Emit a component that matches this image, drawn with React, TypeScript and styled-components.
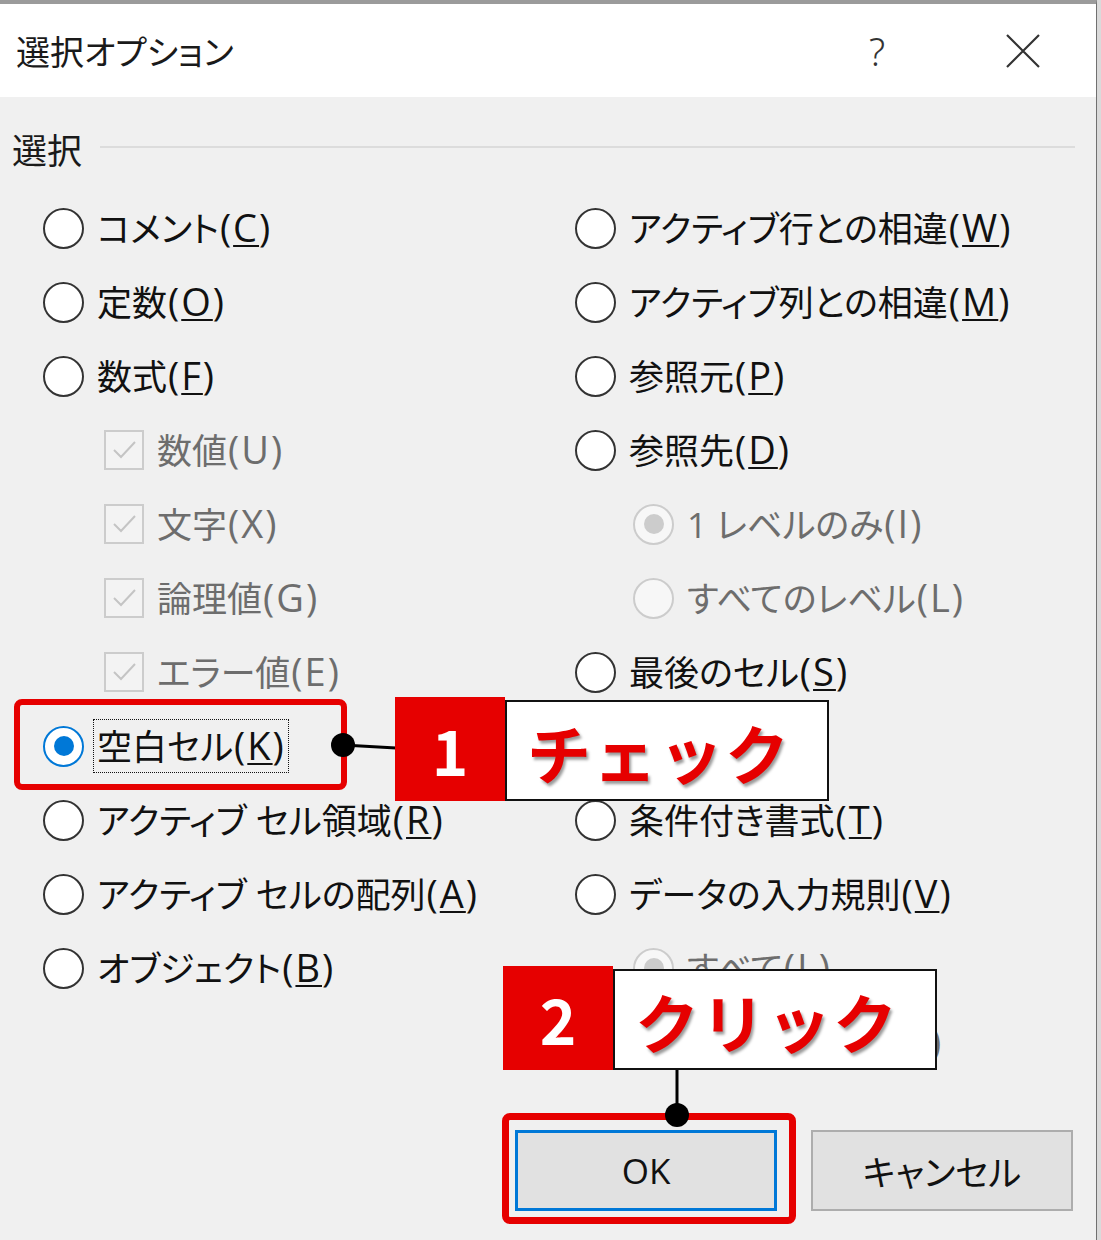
import React from "react";
import styled, { createGlobalStyle } from "styled-components";

const GlobalStyle = createGlobalStyle`
  html, body {
    margin: 0;
    padding: 0;
    background: #f0f0f0;
  }
  body {
    font-family: "Open Sans", "Noto Sans CJK JP", sans-serif;
  }
`;

const RED = "#e60000";

const Page = styled.div`
  position: relative;
  width: 1101px;
  height: 1240px;
  background: #dadada;
  overflow: hidden;
`;

const Dialog = styled.div`
  width: 1096px;
  height: 1236px;
  border-top: 4px solid #9b9b9b;
  border-right: 1px solid #707070;
  background: #f0f0f0;
  display: flex;
  flex-direction: column;
  font-feature-settings: "palt";
`;

const TitleBar = styled.div`
  height: 93px;
  background: #fff;
  display: flex;
  align-items: center;
  padding: 0 56px 0 16px;
`;

const Title = styled.div`
  flex: 1;
  font-size: 34px;
  color: #1a1a1a;
`;

const HelpMark = styled.div`
  width: 22px;
  margin-right: 118px;
  font-family: "Noto Sans", sans-serif;
  font-weight: 300;
  font-size: 38px;
  color: #333;
  text-align: center;
`;

const Body = styled.div`
  flex: 1;
  padding-top: 28px;
`;

const GroupHeader = styled.div`
  height: 46px;
  display: flex;
  align-items: center;
  padding: 0 21px 0 12px;
  font-size: 35px;
  color: #1a1a1a;
`;

const GroupLine = styled.div`
  flex: 1;
  height: 2px;
  margin: 0 0 2px 18px;
  background: #dcdcdc;
`;

const Columns = styled.div`
  display: flex;
  padding-left: 43px;
  margin-top: 20px;
`;

const Column = styled.div<{ $width?: number }>`
  display: flex;
  flex-direction: column;
  ${(p) => (p.$width ? `width: ${p.$width}px;` : "flex: 1;")}
`;

const Row = styled.div<{ $indent?: number }>`
  height: 74px;
  display: flex;
  align-items: center;
  gap: 13px;
  padding-left: ${(p) => p.$indent ?? 0}px;
`;

const Radio = styled.span<{ $checked?: boolean; $disabled?: boolean }>`
  box-sizing: border-box;
  width: 41px;
  height: 41px;
  flex: none;
  border-radius: 50%;
  border: 2px solid
    ${(p) => (p.$disabled ? "#cccccc" : p.$checked ? "#0078d7" : "#333")};
  background: ${(p) => (p.$disabled ? "#f7f7f7" : "#fff")};
  display: flex;
  align-items: center;
  justify-content: center;
  &::after {
    content: "";
    display: ${(p) => (p.$checked ? "block" : "none")};
    width: 20px;
    height: 20px;
    border-radius: 50%;
    background: ${(p) => (p.$disabled ? "#cccccc" : "#0078d7")};
  }
`;

const CheckBox = styled.span`
  box-sizing: border-box;
  width: 40px;
  height: 40px;
  flex: none;
  border: 2px solid #cccccc;
  background: #f3f3f3;
  display: flex;
  align-items: center;
  justify-content: center;
`;

const Label = styled.span<{ $disabled?: boolean; $focused?: boolean }>`
  font-size: 35px;
  line-height: 48px;
  white-space: nowrap;
  color: ${(p) => (p.$disabled ? "#6d6d6d" : "#111")};
  padding: 1px 2px 1px 3px;
  margin-left: -3px;
  outline: ${(p) => (p.$focused ? "1px dotted #111" : "none")};
`;

const Accel = styled.span`
  font-size: 38px;
  letter-spacing: 2px;
  margin-left: 1px;
`;

const Key = styled.u`
  text-decoration-thickness: 2px;
  text-underline-offset: 3px;
`;

const ButtonRow = styled.div`
  display: flex;
  justify-content: flex-end;
  gap: 34px;
  padding-right: 23px;
  margin-top: 51px;
`;

const Button = styled.div<{ $primary?: boolean }>`
  box-sizing: border-box;
  width: 262px;
  height: 81px;
  background: #e1e1e1;
  border: ${(p) => (p.$primary ? "3px solid #0078d7" : "2px solid #adadad")};
  display: flex;
  align-items: center;
  justify-content: center;
  font-size: 35px;
  color: #111;
`;

/* annotations laid over the dialog */

const Highlight = styled.div<{ $x: number; $y: number; $w: number; $h: number; $b: number }>`
  position: absolute;
  box-sizing: border-box;
  left: ${(p) => p.$x}px;
  top: ${(p) => p.$y}px;
  width: ${(p) => p.$w}px;
  height: ${(p) => p.$h}px;
  border: ${(p) => p.$b}px solid ${RED};
  border-radius: 8px;
`;

const Callout = styled.div<{ $x: number; $y: number }>`
  position: absolute;
  left: ${(p) => p.$x}px;
  top: ${(p) => p.$y}px;
  display: flex;
  align-items: flex-end;
  font-family: "Noto Sans CJK JP", sans-serif;
`;

const StepBadge = styled.div`
  width: 110px;
  height: 104px;
  background: ${RED};
  color: #fff;
  font-size: 62px;
  font-weight: 700;
  display: flex;
  align-items: center;
  justify-content: center;
`;

const CalloutText = styled.div`
  box-sizing: border-box;
  width: 324px;
  height: 101px;
  background: #fff;
  border: 2px solid #111;
  display: flex;
  align-items: center;
  padding: 0 0 0 20px;
  white-space: nowrap;
  overflow: hidden;
  font-size: 64px;
  font-weight: 700;
  letter-spacing: 2px;
  color: ${RED};
  text-shadow: 2px 3px 3px rgba(0, 0, 0, 0.4);
`;

const Connector = styled.svg`
  position: absolute;
  left: 0;
  top: 0;
  pointer-events: none;
`;

type Item = {
  kind: "radio" | "check";
  text: string;
  key: string;
  plain?: boolean;
  indent?: number;
  checked?: boolean;
  disabled?: boolean;
  focused?: boolean;
};

const left: Item[] = [
  { kind: "radio", text: "コメント", key: "C" },
  { kind: "radio", text: "定数", key: "O" },
  { kind: "radio", text: "数式", key: "F" },
  { kind: "check", text: "数値", key: "U", plain: true, indent: 61, checked: true, disabled: true },
  { kind: "check", text: "文字", key: "X", plain: true, indent: 61, checked: true, disabled: true },
  { kind: "check", text: "論理値", key: "G", plain: true, indent: 61, checked: true, disabled: true },
  { kind: "check", text: "エラー値", key: "E", plain: true, indent: 61, checked: true, disabled: true },
  { kind: "radio", text: "空白セル", key: "K", checked: true, focused: true },
  { kind: "radio", text: "アクティブ セル領域", key: "R" },
  { kind: "radio", text: "アクティブ セルの配列", key: "A" },
  { kind: "radio", text: "オブジェクト", key: "B" },
];

const right: Item[] = [
  { kind: "radio", text: "アクティブ行との相違", key: "W" },
  { kind: "radio", text: "アクティブ列との相違", key: "M" },
  { kind: "radio", text: "参照元", key: "P" },
  { kind: "radio", text: "参照先", key: "D" },
  { kind: "radio", text: "1 レベルのみ", key: "I", plain: true, indent: 58, checked: true, disabled: true },
  { kind: "radio", text: "すべてのレベル", key: "L", plain: true, indent: 58, disabled: true },
  { kind: "radio", text: "最後のセル", key: "S" },
  { kind: "radio", text: "可視セル", key: "Y" },
  { kind: "radio", text: "条件付き書式", key: "T" },
  { kind: "radio", text: "データの入力規則", key: "V" },
  { kind: "radio", text: "すべて", key: "L", plain: true, indent: 58, checked: true, disabled: true },
  { kind: "radio", text: "同じ入力規則", key: "E", plain: true, indent: 58, disabled: true },
];

const CheckMark = () => (
  <svg width="30" height="30" viewBox="0 0 30 30">
    <polyline points="5,15 12,22 26,7" fill="none" stroke="#c4c4c4" strokeWidth="2" />
  </svg>
);

const CloseIcon = () => (
  <svg width="34" height="34" viewBox="0 0 34 34">
    <path d="M1 1 L33 33 M33 1 L1 33" stroke="#333" strokeWidth="2.2" fill="none" />
  </svg>
);

const Option: React.FC<{ item: Item }> = ({ item }) => (
  <Row $indent={item.indent}>
    {item.kind === "radio" ? (
      <Radio $checked={item.checked} $disabled={item.disabled} />
    ) : (
      <CheckBox>{item.checked && <CheckMark />}</CheckBox>
    )}
    <Label $disabled={item.disabled} $focused={item.focused}>
      {item.text}
      <Accel>
        ({item.plain ? item.key : <Key>{item.key}</Key>})
      </Accel>
    </Label>
  </Row>
);

const App: React.FC = () => {
  return (
    <Page>
      <GlobalStyle />
      <Dialog>
        <TitleBar>
          <Title>選択オプション</Title>
          <HelpMark>?</HelpMark>
          <CloseIcon />
        </TitleBar>
        <Body>
          <GroupHeader>
            選択
            <GroupLine />
          </GroupHeader>
          <Columns>
            <Column $width={532}>
              {left.map((it) => (
                <Option key={it.text} item={it} />
              ))}
            </Column>
            <Column>
              {right.map((it) => (
                <Option key={it.text} item={it} />
              ))}
            </Column>
          </Columns>
          <ButtonRow>
            <Button $primary>OK</Button>
            <Button>キャンセル</Button>
          </ButtonRow>
        </Body>
      </Dialog>

      <Highlight $x={14} $y={699} $w={333} $h={91} $b={6} />
      <Highlight $x={502} $y={1113} $w={294} $h={111} $b={7} />

      <Connector width="1101" height="1240">
        <line x1="343" y1="745" x2="396" y2="748" stroke="#000" strokeWidth="3" />
        <circle cx="343" cy="745" r="12" fill="#000" />
        <line x1="677" y1="1070" x2="677" y2="1114" stroke="#000" strokeWidth="3" />
        <circle cx="677" cy="1115" r="12" fill="#000" />
      </Connector>

      <Callout $x={395} $y={697}>
        <StepBadge>1</StepBadge>
        <CalloutText>チェック</CalloutText>
      </Callout>
      <Callout $x={503} $y={966}>
        <StepBadge>2</StepBadge>
        <CalloutText>クリック</CalloutText>
      </Callout>
    </Page>
  );
};

export default App;
